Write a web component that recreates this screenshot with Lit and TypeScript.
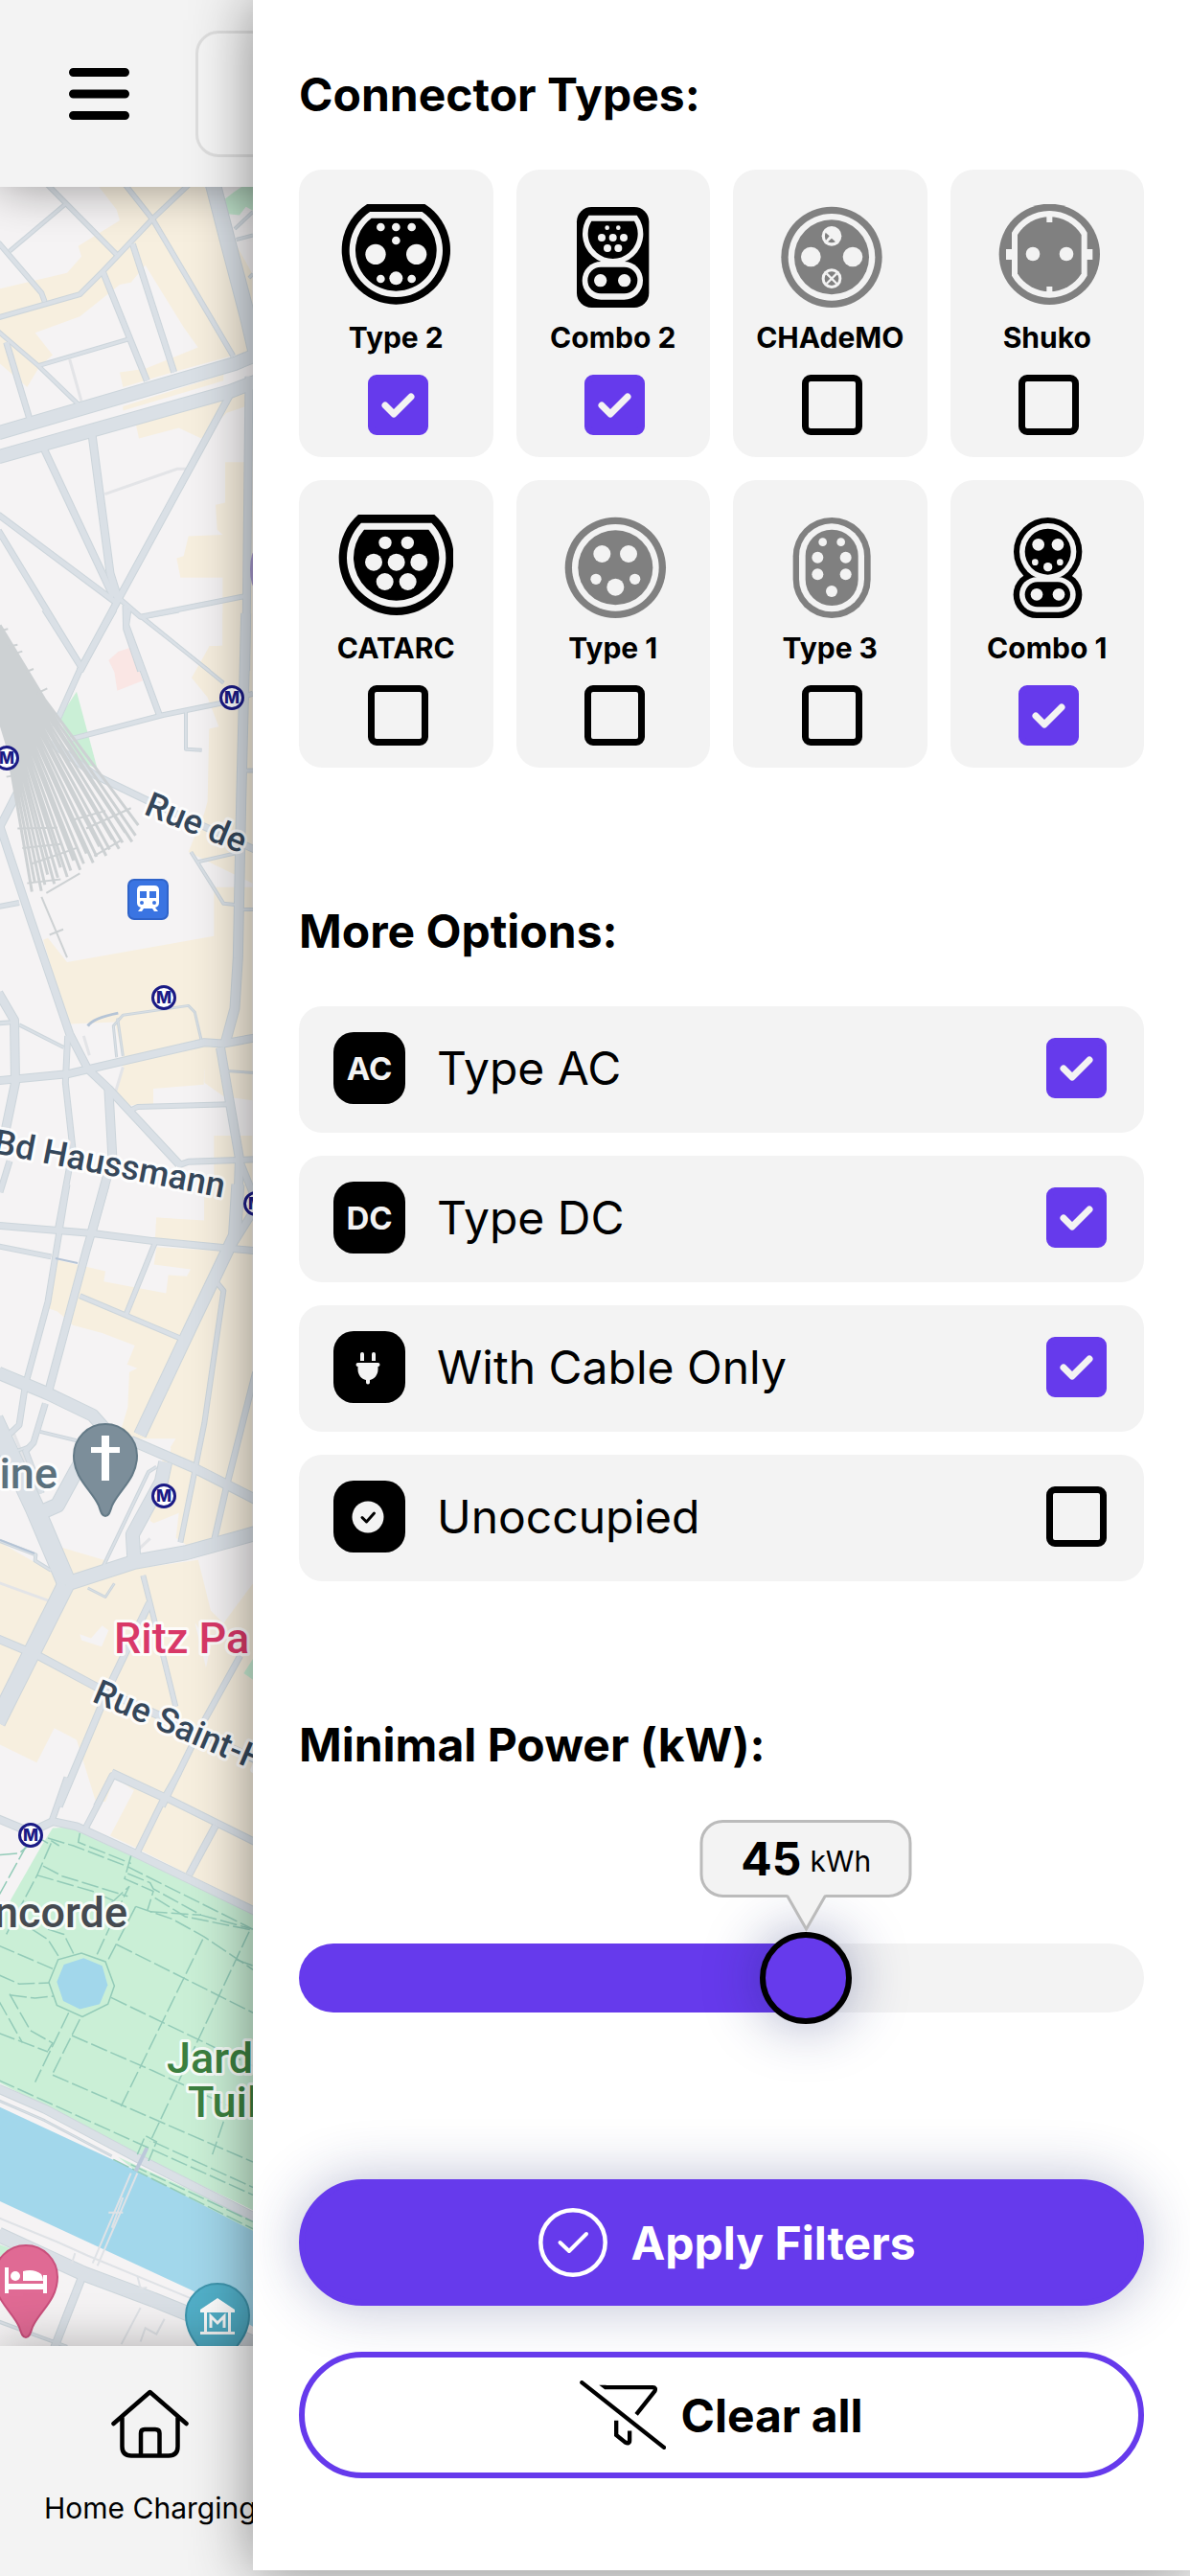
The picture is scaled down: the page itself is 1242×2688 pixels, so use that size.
import { LitElement, html, svg, css } from "lit";
import { customElement, state } from "lit/decorators.js";
import { repeat } from "lit/directives/repeat.js";
import { styleMap } from "lit/directives/style-map.js";

type Dot = [number, number, number];

const LIGHT = "#f3f3f3";
const GREY = "#808080";

const dots = (list: Dot[]) =>
  list.map(([x, y, r]) => svg`<circle cx=${x} cy=${y} r=${r} fill=${LIGHT}></circle>`);

/* A circle cut off by a horizontal chord at the given top. */
const cutCircle = (cx: number, cy: number, r: number, top: number, fill: string) => {
  const dx = Math.sqrt(r * r - (cy - top) * (cy - top));
  return svg`<path fill=${fill} d=${`M${cx - dx} ${top}H${cx + dx}A${r} ${r} 0 1 1 ${cx - dx} ${top}Z`}></path>`;
};

/* A circle cut off by two vertical chords. */
const slabCircle = (cx: number, cy: number, r: number, half: number, fill: string) => {
  const dy = Math.sqrt(r * r - half * half);
  return svg`<path fill=${fill} d=${`M${cx - half} ${cy - dy}A${r} ${r} 0 0 1 ${cx + half} ${cy - dy}V${cy + dy}A${r} ${r} 0 0 1 ${cx - half} ${cy + dy}Z`}></path>`;
};

const rings = (cx: number, cy: number, fill: string) => svg`
  <circle cx=${cx} cy=${cy} r="158" fill=${fill}></circle>
  <circle cx=${cx} cy=${cy} r="136" fill=${LIGHT}></circle>
  <circle cx=${cx} cy=${cy} r="117" fill=${fill}></circle>`;

const pill = (x: number, y: number, w: number, h: number, r: number, fill: string) =>
  svg`<rect x=${x} y=${y} width=${w} height=${h} rx=${r} fill=${fill}></rect>`;

interface Connector {
  id: string;
  name: string;
  on: boolean;
  box: string;
  art: unknown;
}

const CONNECTORS: Connector[] = [
  {
    id: "type2", name: "Type 2", on: true, box: "160 129 360 324",
    art: svg`${cutCircle(341, 273, 170, 129, "#000")}${cutCircle(341, 274, 146, 153, LIGHT)}${cutCircle(341, 274, 127, 173, "#000")}
      ${dots([[293, 201, 13], [341, 201, 13], [390, 201, 13], [341, 243, 13], [277, 286, 32], [405, 286, 32], [293, 363, 13], [390, 363, 13], [341, 361, 21]])}`,
  },
  {
    id: "combo2", name: "Combo 2", on: true, box: "839 129 360 324",
    art: svg`${pill(905, 138, 226, 315, 46, "#000")}${cutCircle(1018, 222, 95, 164, LIGHT)}${pill(922, 309, 190, 119, 59, LIGHT)}
      ${cutCircle(1018, 222, 78, 182, "#000")}${pill(939, 326, 156, 83, 41, "#000")}
      ${dots([[1000, 203, 7], [1035, 203, 7], [983, 234, 12], [1018, 234, 12], [1052, 234, 12], [1001, 267, 12], [1035, 267, 12], [979, 368, 20], [1054, 368, 20]])}`,
  },
  {
    id: "chademo", name: "CHAdeMO", on: false, box: "169 129 360 324",
    art: svg`${rings(355, 295, GREY)}${dots([[290, 294, 31], [421, 294, 31], [355, 229, 31], [355, 362, 31]])}
      <path fill=${GREY} d="M336 218L348 229L337 242Q331 229 336 218ZM355 236L367 247Q355 253 343 247Z"></path>
      <circle cx="355" cy="362" r="22" fill=${GREY}></circle>
      <path stroke=${LIGHT} stroke-width="7" d="M339 346L371 378M371 346L339 378"></path>`,
  },
  {
    id: "shuko", name: "Shuko", on: false, box: "848 129 360 324",
    art: svg`<circle cx="1035" cy="286" r="158" fill=${GREY}></circle>
      ${slabCircle(1035, 286, 136, 118, LIGHT)}${slabCircle(1035, 286, 117, 100, GREY)}
      <path fill=${LIGHT} d="M899 270H920V303H899ZM1150 270H1170V303H1150ZM1026 152H1044V186H1026ZM1026 387H1044V420H1026Z"></path>
      ${dots([[983, 285, 22], [1088, 285, 22]])}`,
  },
  {
    id: "catarc", name: "CATARC", on: false, box: "160 141 360 324",
    art: svg`${cutCircle(342, 276, 180, 141, "#000")}${cutCircle(342, 276, 155, 167, LIGHT)}${cutCircle(342, 276, 134, 188, "#000")}
      ${dots([[307, 229, 20], [377, 229, 20], [271, 290, 27], [342, 290, 27], [413, 290, 27], [306, 351, 27], [378, 351, 27]])}`,
  },
  {
    id: "type1", name: "Type 1", on: false, box: "839 141 360 324",
    art: svg`${rings(1026, 307, GREY)}${dots([[984, 264, 27], [1067, 264, 27], [965, 343, 17], [1087, 343, 17], [1026, 368, 27]])}`,
  },
  {
    id: "type3", name: "Type 3", on: false, box: "169 141 360 324",
    art: svg`${pill(234, 150, 243, 315, 121, GREY)}${pill(253, 169, 204, 276, 102, LIGHT)}${pill(273, 188, 165, 238, 82, GREY)}
      ${dots([[327, 227, 13], [384, 227, 13], [311, 275, 18], [399, 275, 18], [311, 328, 18], [399, 328, 18], [355, 381, 18]])}`,
  },
  {
    id: "combo1", name: "Combo 1", on: true, box: "848 141 360 324",
    art: svg`<circle cx="1030" cy="257" r="107"></circle>${pill(922, 319, 215, 146, 73, "#000")}
      <circle cx="1030" cy="257" r="89" fill=${LIGHT}></circle>${pill(941, 337, 176, 109, 54, LIGHT)}
      <circle cx="1030" cy="257" r="72"></circle>${pill(958, 352, 142, 78, 39, "#000")}
      ${dots([[1000, 235, 19], [1061, 235, 19], [990, 290, 10], [1068, 290, 10], [1030, 305, 14], [995, 391, 19], [1064, 391, 19]])}`,
  },
];

interface Option {
  id: string;
  name: string;
  on: boolean;
  badge: unknown;
}

const OPTIONS: Option[] = [
  { id: "ac", name: "Type AC", on: true, badge: "AC" },
  { id: "dc", name: "Type DC", on: true, badge: "DC" },
  {
    id: "cable", name: "With Cable Only", on: true,
    badge: html`<svg class="badge-art" viewBox="0 0 75 75" aria-hidden="true">
      <path fill=${LIGHT} d="M28 24a2 2 0 0 1 4 0v7h-4ZM40 24a2 2 0 0 1 4 0v7h-4ZM25.500 33h21a2 2 0 0 1 0 4v3c0 6-4 10-8.500 11v2.500a2 2 0 0 1-4 0V51c-4.500-1-8.500-5-8.500-11v-3a2 2 0 0 1 0-4Z"></path>
    </svg>`,
  },
  {
    id: "free", name: "Unoccupied", on: false,
    badge: html`<svg class="badge-art" viewBox="0 0 75 75" aria-hidden="true">
      <circle cx="36" cy="38" r="16.500" fill=${LIGHT}></circle>
      <path d="M30 38.500L34.500 43L42.500 34" fill="none" stroke="#000" stroke-width="3" stroke-linecap="round" stroke-linejoin="round"></path>
    </svg>`,
  },
];

/* ---- map ---- */

interface Sheet {
  place: string;
  sand?: string[];
  bare?: string[];
  green?: string[];
  roads: [number, string][];
  lanes?: string[];
}

const SHEETS: Sheet[] = [
  {
    place: "scale(.33333 .44643)",
    sand: [
      "310,437 640,437 790,640 790,830 735,830 540,870 385,905 375,870 455,862 620,812 575,765 455,620 410,660 375,665 250,740 110,778 165,830 125,855 85,905 0,850 0,675 210,638 255,600 245,575 375,515 365,490",
      "385,950 700,875 700,890 385,960",
      "425,990 720,930 790,905 790,1568 655,1568 655,1510 697,1510 697,1350 565,1350 553,1305 575,1300 590,1253 697,1250 680,1238 675,1180 705,1175 705,1080 765,1080 770,950 710,965 630,1025 560,1000 435,1025",
    ],
    green: ["705,465 730,450 770,430 792,430 792,492 770,483 750,503 712,500"],
    roads: [
      [14, "-5,1012 735,850 800,830"], [14, "-5,1068 720,915 800,892"],
      [16, "665,425 715,570 775,740 800,820"], [8, "780,880 770,1568"],
      [5, "-5,742 250,688 325,632 480,510 600,425"], [5, "140,425 365,595"], [4, "205,477 30,587"],
      [5, "-5,567 130,685 140,705"], [5, "385,425 480,515 730,832"], [6, "415,570 545,870"],
      [6, "322,635 460,890"], [4, "-5,775 120,855 245,945"], [4, "120,855 405,792"], [6, "20,800 95,985"],
      [7, "138,1050 355,1395"], [8, "288,1015 345,1340 370,1400"], [7, "722,920 375,1395 250,1568"],
      [6, "-5,1203 370,1412"], [6, "-5,1240 255,1560"], [5, "375,1400 440,1442 770,1393"],
      [3, "440,1442 655,1568"], [6, "393,1415 395,1470 440,1568"], [3, "735,535 792,495"], [3, "740,560 792,550"],
      [3, "780,650 792,640"],
    ],
    lanes: ["218,840 255,938", "328,1155 555,1096 582,1096"],
  },
  {
    place: "translate(0 640) scale(.33333 .40816)",
    sand: [
      "697,0 790,0 790,690 665,640 590,610 640,510 650,480 655,295 685,290 650,215 600,165 655,85 697,82",
      "135,835 150,830 210,892 670,825 670,700 790,700 790,1245 700,1235 640,1200 640,1160 690,1150 385,1160 385,1140 360,1045 220,1050 180,960",
      "385,1160 640,1120 700,1120 700,1150 640,1165 638,1205 480,1215 480,1255 405,1258 360,1225",
      "670,1335 790,1335 790,1568 640,1568 640,1480 670,1470",
      "490,1545 640,1555 640,1568 488,1568",
    ],
    green: ["187,265 240,200 305,398 230,370"],
    roads: [
      [6, "402,-10 395,30 500,262"], [6, "357,-10 250,145 170,290"], [6, "140,-10 255,138"],
      [3, "440,5 700,178"], [2, "450,12 560,-5"], [5, "220,322 510,260 720,225 792,205"],
      [10, "770,0 755,480 745,880 735,1010 705,1100"], [3, "582,250 582,347 632,350"], [7, "160,330 300,415 460,478 800,605"],
      [3, "598,610 700,742 735,745"], [3, "620,635 745,612"],
      [8, "60,450 0,545 95,780 218,1075 275,1165 340,1215 560,1408"], [5, "-5,750 60,740"],
      [9, "-5,970 45,1040 48,1200 15,1330"], [4, "-5,1048 45,1045"], [3, "60,1052 200,1110"],
      [6, "212,1080 205,1200 228,1370 180,1580"], [8, "-5,1195 210,1178 400,1142 640,1097 700,1100 800,1085"],
      [9, "340,1215 352,1390 288,1580"], [6, "30,1400 0,1480"],
      [2, "365,1135 355,1055 385,1027 590,1003 610,1020 630,1090"], [2, "368,1035 385,1132"],
      [9, "690,1110 750,1395 742,1580"], [7, "748,1395 800,1500"], [5, "405,1272 430,1262 718,1255"],
      [6, "555,1412 590,1402 800,1396"], [2, "710,1170 800,1175"], [4, "770,402 800,402"], [3, "760,757 800,757"],
    ],
    lanes: ["385,1160 360,1228", "262,1080 280,1130"],
  },
  {
    place: "translate(0 1240) scale(.33333 .40816)",
    sand: [
      "490,75 640,82 640,0 790,0 790,160 485,135",
      "165,180 330,212 325,238 520,268 527,222 585,225 597,207 482,195 490,150 790,165 790,870 590,915 470,850 490,720 550,640 430,640 378,620 400,560 405,470 430,460 398,450 422,402 320,370 228,350 180,315 145,305",
      "0,905 150,975 185,1000 180,915 325,950 320,985 620,950 792,900 792,1568 0,1568",
    ],
    bare: [
      "620,948 792,900 792,1010 700,1112 660,1080", "250,1140 285,1150 320,1118 340,1130 318,1172 255,1155",
      "-5,1420 115,1468 170,1380 240,1410 300,1568 -5,1568", "520,640 535,665 530,690 510,680",
      "330,1568 360,1505 420,1540 410,1568", "610,1110 660,1170 645,1225", "470,860 560,830 550,900 450,920",
    ],
    green: ["763,1240 792,1203 792,1256"],
    roads: [
      [6, "210,-10 150,290 80,500 60,605 25,632"], [8, "330,-10 270,160 150,525"], [6, "142,550 105,650 80,672 130,780"],
      [7, "-5,95 290,115 480,135 800,160"], [5, "-5,148 160,175"], [5, "485,140 395,322"], [5, "250,275 575,387"],
      [13, "745,-10 735,120 600,350 438,630"], [8, "800,50 735,135"], [5, "678,240 700,262 640,600 565,905"],
      [6, "800,470 710,760 672,895"], [13, "-5,472 150,525 290,580 350,635"], [10, "410,645 600,712 800,795"],
      [20, "-20,590 110,820 210,1012"], [15, "205,1012 420,955 580,932 800,882"], [18, "205,1015 -10,1365"],
      [15, "110,835 180,810 240,720 330,600"], [14, "518,700 505,750 415,885 420,955"], [3, "490,712 465,725 320,972"],
      [3, "125,622 240,645"], [3, "25,680 90,660"], [3, "-5,900 112,937 110,952 160,977"], [8, "-5,1152 120,1195 310,1278 800,1460"],
      [5, "448,990 470,1060 550,1325"], [7, "468,1060 350,1260 185,1580"], [6, "752,1195 640,1360 508,1580"],
      [5, "300,1580 350,1500 515,1562"], [2, "275,1022 330,1045 358,1010"],
    ],
    lanes: ["-5,1008 155,1055", "375,968 470,895", "40,620 90,720"],
  },
];

const TRACKS = Array.from({ length: 26 }, (_, i) => {
  const t = i / 25;
  const ends = [0, -20, 10][i % 3];
  return `M${-60 + 60 * t} ${120 - 90 * t}L${20 + 120 * t} ${330 - 110 * t}L${100 + 338 * t + ends / 4} ${712 - 150 * t + ends}`;
}).join("");

const TIES =
  "M0 45L25 40M25 85L55 80M50 102L70 97M80 150L105 142M115 205L148 192M20 418L60 412M55 550L180 548M70 600L190 590M85 690L190 680M145 715L250 665M270 550L410 498M295 620L380 580M220 530L330 505M100 640L240 600";

const PATHS = [
  "160,120 115,185 60,250 20,300", "150,110 230,125 395,165 792,290", "250,100 245,118 410,160", "135,165 195,185 400,225",
  "115,183 290,215 395,245", "410,145 390,190 480,215 462,252", "400,180 470,198 480,210 630,262 792,290",
  "345,240 405,205 385,230 300,345", "425,245 335,355", "425,245 540,270 640,305 792,370", "470,255 630,262", "485,228 580,265 792,292",
  "635,310 375,645", "780,295 470,710", "740,350 792,362", "365,320 792,455", "348,425 792,560", "225,500 480,570 720,640",
  "165,578 792,750", "700,670 665,735", "215,455 110,592", "250,468 165,575", "-5,322 165,368", "-5,380 60,398 155,396",
  "30,420 110,426 170,422", "30,418 95,490 165,515 150,530", "-5,430 70,514", "-5,495 150,532", "100,290 150,310 185,345",
  "150,290 200,300 230,338", "-5,588 430,712 792,815", "480,710 792,800", "430,735 455,698 490,710 465,748",
  "355,745 792,882", "160,115 185,125", "410,755 792,868", "150,120 95,100", "0,143 60,140 100,118", "-5,225 80,128",
];

const PARK_ROADS: [number, string][] = [
  [8, "-5,72 95,98 165,77 240,87 430,142 800,255"], [6, "210,-10 160,80"], [6, "355,-15 268,90"], [7, "350,-20 520,30 800,118"],
  [6, "560,-20 510,35 430,138"], [7, "675,85 592,182"], [9, "-5,605 140,645 430,742 800,860"], [2, "-5,628 140,668 350,738"],
  [15, "-5,893 260,970 480,1022 590,1050 800,1110"], [8, "255,980 165,1125"], [3, "-5,1065 210,1115"],
];

const METRO = [[242, 728], [7, 791], [171, 1041], [267, 1256], [171, 1561], [32, 1915]];

const PIN = "M0 63C-4 63-5 58-7 52C-14 36-33 24-33 0A33 33 0 1 1 33 0C33 24 14 36 7 52C5 58 4 63 0 63Z";

const roadLayer = (place: string, roads: [number, string][], extra: number, color: string) => svg`
  <g transform=${place} fill="none" stroke=${color} stroke-linejoin="round">
    ${roads.map(([w, p]) => svg`<polyline class="line" points=${p} stroke-width=${w + extra}></polyline>`)}
  </g>`;

const areas = (list: string[] | undefined, fill: string) =>
  (list ?? []).map((p) => svg`<polygon points=${p} fill=${fill}></polygon>`);

const PARK = "translate(0 1860) scale(.33333 .52806)";

@customElement("city-map")
export class CityMap extends LitElement {
  static styles = css`
    :host { display: flex; flex-direction: column; overflow: hidden; background: #f5f3f4; }
    .map { flex: 1; min-height: 0; width: 100%; display: block; font-family: Roboto, sans-serif; }
    .line { vector-effect: non-scaling-stroke; }
    .name { font-weight: 500; paint-order: stroke; stroke: #fff; stroke-opacity: 0.85; stroke-width: 6px; stroke-linejoin: round; }
    .street { font-size: 36px; fill: #35475a; }
    .place { font-size: 45px; }
    .metro { font: 800 17px Inter, sans-serif; fill: #1a1a85; }
  `;

  render() {
    return html`<svg class="map" viewBox="0 195 1242 2253" preserveAspectRatio="xMinYMin slice" role="img" aria-label="Map">
      ${SHEETS.map((s) => svg`<g transform=${s.place}>
        ${areas(s.sand, "#f7efdf")}${areas(s.bare, "#f5f3f4")}${areas(s.green, "#caefd6")}
        ${(s.lanes ?? []).map((p) => svg`<polyline class="line" points=${p} fill="none" stroke="#e3e4e7" stroke-width="3"></polyline>`)}
      </g>`)}
      <g transform=${PARK}>
        <polygon fill="#f7efdf" points="420,15 470,-10 792,-10 792,245 600,185 430,130 345,105"></polygon>
        <polygon fill="#caefd6" points="-5,285 35,230 130,125 165,90 240,88 430,140 792,258 792,845 430,735 -5,592"></polygon>
        <polygon fill="#f5f3f4" points="-5,598 430,740 792,852 792,885 -5,660"></polygon>
        <polygon fill="#caefd6" points="370,740 792,862 792,887 440,775"></polygon>
        <polygon fill="#a2d7eb" points="-5,640 430,768 792,886 792,1075 600,1003 -5,826"></polygon>
        <polygon fill="#caefd6" points="-5,912 50,925 30,945 -5,940"></polygon>
      </g>
      <g transform="translate(0 640) scale(.33333 .40816)">
        <polygon fill="#fae6e4" points="340,120 370,98 410,87 447,172 367,198 358,150"></polygon>
      </g>
      ${SHEETS.map((s) => roadLayer(s.place, s.roads, 1, "#ccd5db"))}
      ${roadLayer(PARK, PARK_ROADS, 1, "#ccd5db")}
      ${SHEETS.map((s) => roadLayer(s.place, s.roads, -1, "#dae0e6"))}
      ${roadLayer(PARK, PARK_ROADS, -1, "#dae0e6")}
      <g transform=${PARK} fill="none">
        ${PATHS.map((p) => svg`<polyline class="line" points=${p} stroke="#93cbb8" stroke-width="1.500" stroke-dasharray="18 4"></polyline>`)}
        <polygon class="line" points="153,395 182,350 255,337 330,354 358,402 338,438 258,463 178,440" fill="#caefd6" stroke="#93cbb8" stroke-width="1.500"></polygon>
        <polygon points="262,347 320,362 337,400 312,438 250,448 198,432 178,394 200,360" fill="#a2d7eb"></polygon>
        <path class="line" d="M410 772L290 950M430 772L305 955M340 850L385 850M385 820L350 880M-5 860L180 908L275 935L600 1020M235 930L225 950M430 975L440 1000L460 998M380 1110L440 1038M515 1060L490 1090L455 1078L440 1105" stroke="#dfe2e6" stroke-width="2"></path>
        <path class="line" d="M460 722L425 768" stroke="#bcc8da" stroke-width="4"></path>
      </g>
      <g transform="translate(0 640) scale(.33333 .40816)" fill="none" stroke="#cdd1d3">
        <path class="line" d=${TRACKS} stroke-width="3"></path>
        <path class="line" d=${TIES} stroke-width="2"></path>
        <path class="line" d="M130 725L210 880M155 822L198 808" stroke-width="2"></path>
        <path class="line" d="M275 1055Q290 1035 370 1022" stroke="#b5c4d6" stroke-width="3"></path>
      </g>
      <path d="M58 1313L81 1318M0 1607L36 1621" stroke="#b5c4d6" stroke-width="2"></path>
      <ellipse cx="267" cy="594" rx="6" ry="20" fill="#a99ad0"></ellipse>

      ${METRO.map(([x, y]) => svg`<g>
        <circle cx=${x} cy=${y} r="11.500" fill="#fff" stroke="#1a1a85" stroke-width="3"></circle>
        <text class="metro" x=${x} y=${y + 6} text-anchor="middle">M</text>
      </g>`)}

      <g transform="translate(133 917)">
        <rect x="1" y="1" width="41" height="41" rx="6" fill="#3a74e2" stroke="#2f63c9" stroke-width="2"></rect>
        <path fill="#fff" d="M10 12Q10 7 15 7H28Q33 7 33 12V25Q33 29 29 30L32 34H28L26 31H17L15 34H11L14 30Q10 29 10 25Z"></path>
        <path fill="#3a74e2" d="M13 13H20V20H13ZM23 13H30V20H23Z"></path>
        <circle cx="15" cy="25" r="2" fill="#3a74e2"></circle><circle cx="28" cy="25" r="2" fill="#3a74e2"></circle>
      </g>

      <text class="name street" transform="translate(149 849) rotate(22)">Rue de</text>
      <text class="name street" transform="translate(-8 1203) rotate(11)">Bd Haussmann</text>
      <text class="name street" transform="translate(95 1775) rotate(23)">Rue Saint-H</text>
      <text class="name place" x="60" y="1553" text-anchor="end" fill="#5b717d">ine</text>
      <text class="name place" x="119" y="1725" fill="#d93868">Ritz Pa</text>
      <text class="name place" x="133" y="2011" text-anchor="end" fill="#454a50">ncorde</text>
      <text class="name place" x="174" y="2163" fill="#3c8040">Jard</text>
      <text class="name place" x="196" y="2209" fill="#3c8040">Tuil</text>

      <g transform="translate(110 1519)">
        <path d=${PIN} fill="#7c8e9a" stroke="#647a87" stroke-width="2"></path>
        <path d="M-4-21H4V-9H15V-3H4V26H-4V-3H-15V-9H-4Z" fill="#fff"></path>
      </g>
      <g transform="translate(27 2376)">
        <path d=${PIN} fill="#e06a94" stroke="#c9507c" stroke-width="2"></path>
        <path d="M-22-10H-18V7H18V-2H22V17H18V13H-18V17H-22ZM-3-6Q8-9 16-3Q18 0 18 4H-3Z" fill="#fff"></path>
        <circle cx="-11" cy="-1" r="5" fill="#fff"></circle>
      </g>
      <g transform="translate(227 2416)">
        <path d=${PIN} fill="#52b0c9" stroke="#3f96ae" stroke-width="2"></path>
        <path d="M-18-6L0-18L18-6V-3H14V17H18V20H-18V17H-14V-3H-18ZM-11-3V17H11V-3Z" fill="#fff" fill-rule="evenodd"></path>
        <path d="M-7 13V1L0 8L7 1V13" fill="none" stroke="#fff" stroke-width="3"></path>
      </g>
    </svg>`;
  }
}

const tick = html`<svg class="tick" viewBox="0 0 63 63" aria-hidden="true">
  <path d="M18 32L27 41L45 23" fill="none" stroke=${LIGHT} stroke-width="7" stroke-linecap="round" stroke-linejoin="round"></path>
</svg>`;

@customElement("app-root")
export class AppRoot extends LitElement {
  static styles = css`
    :host {
      --accent: #663aec;
      --soft: #f3f3f3;
      --glow: 0 0 60px rgba(30, 40, 110, 0.3);
      display: grid;
      min-height: 100vh;
      overflow: hidden;
      font-family: Inter, "Liberation Sans", sans-serif;
      color: #000;
      background: var(--soft);
    }
    *, *::before { box-sizing: border-box; }
    button, input { font: inherit; color: inherit; }

    .backdrop { grid-area: 1 / 1; display: flex; flex-direction: column; }
    .topbar {
      display: flex; align-items: center; gap: 69px; height: 195px; padding: 0 72px;
      background: var(--soft); box-shadow: 0 0 48px rgba(0, 0, 0, 0.4); z-index: 1;
    }
    .menu { padding: 0; border: 0; background: none; display: flex; }
    .menu-art { width: 63px; height: 54px; }
    .search { flex: 1; min-width: 0; height: 132px; border: 3px solid #dedede; border-radius: 24px; background: #f5f5f5; padding: 0 36px; }
    .map { flex: 1; }
    .tabs { display: flex; height: 240px; padding: 45px 46px; background: var(--soft); box-shadow: 0 0 48px rgba(0, 0, 0, 0.3); z-index: 1; }
    .tab { display: flex; flex-direction: column; align-items: center; gap: 34px; color: inherit; text-decoration: none; font-size: 30px; line-height: 36px; }
    .tab-art { width: 81px; height: 72px; }

    .drawer {
      grid-area: 1 / 1; align-self: start; z-index: 2;
      margin: 0 0 6px 264px; padding: 69px 48px 96px;
      display: flex; flex-direction: column;
      background: #fff; box-shadow: 0 0 60px rgba(0, 0, 0, 0.45);
    }
    .group { margin: 0 0 141px; padding: 0; border: 0; min-width: 0; }
    .title { margin: 0 0 48px; padding: 0; font-size: 48px; line-height: 60px; font-weight: 700; }

    .box { display: grid; flex: none; width: 63px; height: 63px; }
    .box > * { grid-area: 1 / 1; width: 63px; height: 63px; margin: 0; }
    .check { appearance: none; border: 7px solid #000; border-radius: 9px; }
    .check:checked { background: var(--accent); border-color: var(--accent); }
    .tick { visibility: hidden; pointer-events: none; }
    .check:checked + .tick { visibility: visible; }

    .cards { display: grid; grid-template-columns: repeat(4, 1fr); gap: 24px; }
    .card {
      display: flex; flex-direction: column; align-items: center;
      padding: 36px 0 23px; border-radius: 24px; background: var(--soft);
    }
    .card-art { width: 120px; height: 108px; margin-bottom: 13px; }
    .card-name { font-size: 30px; line-height: 36px; font-weight: 700; margin-bottom: 21px; }
    .card .box { margin-left: 4px; }

    .rows { display: flex; flex-direction: column; gap: 24px; }
    .row {
      display: flex; align-items: center; gap: 33px;
      padding: 27px 39px 30px 36px; border-radius: 24px; background: var(--soft);
    }
    .badge {
      display: flex; align-items: center; justify-content: center; width: 75px; height: 75px;
      border-radius: 21px; background: #000; color: var(--soft); font-size: 33px; font-weight: 700;
    }
    .badge-art { width: 75px; height: 75px; }
    .row-name { flex: 1; font-size: 48px; line-height: 60px; font-weight: 400; }

    .power { margin-bottom: 162px; }
    .bubble { position: relative; z-index: 1; width: fit-content; transform: translateX(-50%); display: flex; flex-direction: column; align-items: center; }
    .reading {
      display: flex; align-items: center; justify-content: center; gap: 9px; min-width: 221px; height: 81px;
      border: 3px solid #bbb; border-radius: 24px; background: var(--soft);
    }
    .value { font-size: 48px; line-height: 60px; font-weight: 700; }
    .unit { font-size: 30px; line-height: 36px; font-weight: 400; padding-top: 4px; }
    .arrow { width: 42px; height: 39px; margin-top: -3px; }
    .slider { display: grid; align-items: center; }
    .slider > * { grid-area: 1 / 1; }
    .track { height: 72px; border-radius: 36px; overflow: hidden; background: var(--soft); }
    .fill { height: 100%; background: var(--accent); }
    .range { appearance: none; height: 96px; margin: 0 -48px; background: none; }
    .range::-webkit-slider-thumb {
      appearance: none; width: 96px; height: 96px; border: 6px solid #000; border-radius: 50%;
      background: var(--accent); box-shadow: 0 0 60px rgba(30, 40, 110, 0.4);
    }

    .actions { display: flex; flex-direction: column; gap: 48px; }
    .action {
      display: flex; align-items: center; justify-content: center; height: 132px; padding: 0;
      border: 6px solid var(--accent); border-radius: 66px; font-size: 48px; font-weight: 700;
    }
    .apply { gap: 24px; padding-left: 12px; background: var(--accent); color: #fff; box-shadow: var(--glow); }
    .clear { gap: 15px; background: #fff; position: relative; }
    .apply-art { width: 72px; height: 72px; }
    .clear-art { width: 90px; height: 72px; }
  `;

  @state() private picked = new Set([...CONNECTORS, ...OPTIONS].filter((c) => c.on).map((c) => c.id));
  @state() private power = 45;

  private toggle(id: string) {
    const next = new Set(this.picked);
    if (!next.delete(id)) next.add(id);
    this.picked = next;
  }

  private clear() {
    this.picked = new Set();
    this.power = 0;
  }

  private box(id: string) {
    return html`<span class="box">
      <input class="check" type="checkbox" id=${id} .checked=${this.picked.has(id)} @change=${() => this.toggle(id)} />
      ${tick}
    </span>`;
  }

  render() {
    const share = `${(this.power / 75) * 100}%`;
    return html`
      <div class="backdrop">
        <header class="topbar">
          <button class="menu" type="button" aria-label="Menu">
            <svg class="menu-art" viewBox="0 0 63 54" stroke="#000" stroke-width="9" stroke-linecap="round" aria-hidden="true">
              <path d="M4.500 4.500H58.500M4.500 27H58.500M4.500 49.500H58.500"></path>
            </svg>
          </button>
          <input class="search" type="search" aria-label="Search" />
        </header>
        <city-map class="map"></city-map>
        <nav class="tabs">
          <a class="tab" href="#home">
            <svg class="tab-art" viewBox="0 0 81 72" fill="none" stroke="#000" stroke-width="4.500" stroke-linecap="round" stroke-linejoin="round" aria-hidden="true">
              <path d="M2.500 36L40.500 3L78.500 36M11.500 30V60Q11.500 69.500 21 69.500H60Q69.500 69.500 69.500 60V30M31 69V46Q31 42 35 42H46Q50.500 42 50.500 46V69"></path>
            </svg>
            Home Charging
          </a>
        </nav>
      </div>

      <aside class="drawer">
        <fieldset class="group">
          <legend class="title">Connector Types:</legend>
          <div class="cards">
            ${repeat(CONNECTORS, (c) => c.id, (c) => html`<label class="card" for=${c.id}>
              <svg class="card-art" viewBox=${c.box} aria-hidden="true">${c.art}</svg>
              <span class="card-name">${c.name}</span>
              ${this.box(c.id)}
            </label>`)}
          </div>
        </fieldset>

        <fieldset class="group">
          <legend class="title">More Options:</legend>
          <div class="rows">
            ${repeat(OPTIONS, (o) => o.id, (o) => html`<label class="row" for=${o.id}>
              <span class="badge">${o.badge}</span>
              <span class="row-name">${o.name}</span>
              ${this.box(o.id)}
            </label>`)}
          </div>
        </fieldset>

        <section class="group power">
          <h2 class="title"><label for="power">Minimal Power (kW):</label></h2>
          <div class="bubble" style=${styleMap({ left: share })}>
            <output class="reading" for="power"><span class="value">${this.power}</span><span class="unit">kWh</span></output>
            <svg class="arrow" viewBox="0 0 42 39" aria-hidden="true">
              <path d="M1 0L21 36L41 0Z" fill="#f3f3f3"></path>
              <path d="M1 1L21 36L41 1" fill="none" stroke="#bbb" stroke-width="3"></path>
            </svg>
          </div>
          <div class="slider">
            <div class="track"><div class="fill" style=${styleMap({ width: share })}></div></div>
            <input class="range" id="power" type="range" min="0" max="75" .value=${String(this.power)}
              @input=${(e: Event) => (this.power = Number((e.target as HTMLInputElement).value))} />
          </div>
        </section>

        <div class="actions">
          <button class="action apply" type="button">
            <svg class="apply-art" viewBox="0 0 72 72" fill="none" stroke="#fff" aria-hidden="true">
              <circle cx="36" cy="36" r="33.700" stroke-width="4.500"></circle>
              <path d="M22.500 36L32 45L50 27" stroke-width="4" stroke-linecap="round" stroke-linejoin="round"></path>
            </svg>
            Apply Filters
          </button>
          <button class="action clear" type="button" @click=${this.clear}>
            <svg class="clear-art" viewBox="167 657 271 216" fill="none" stroke="#000" stroke-width="13" aria-hidden="true">
              <path d="M174 663L432 867" stroke-linecap="round"></path>
              <path d="M245 678H397Q408 678 403 690L345 763M282 782V828L309 850Q324 858 324 845V815"></path>
              <path d="M228 671H250V684H245Z" fill="#000" stroke="none"></path>
            </svg>
            Clear all
          </button>
        </div>
      </aside>
    `;
  }
}
